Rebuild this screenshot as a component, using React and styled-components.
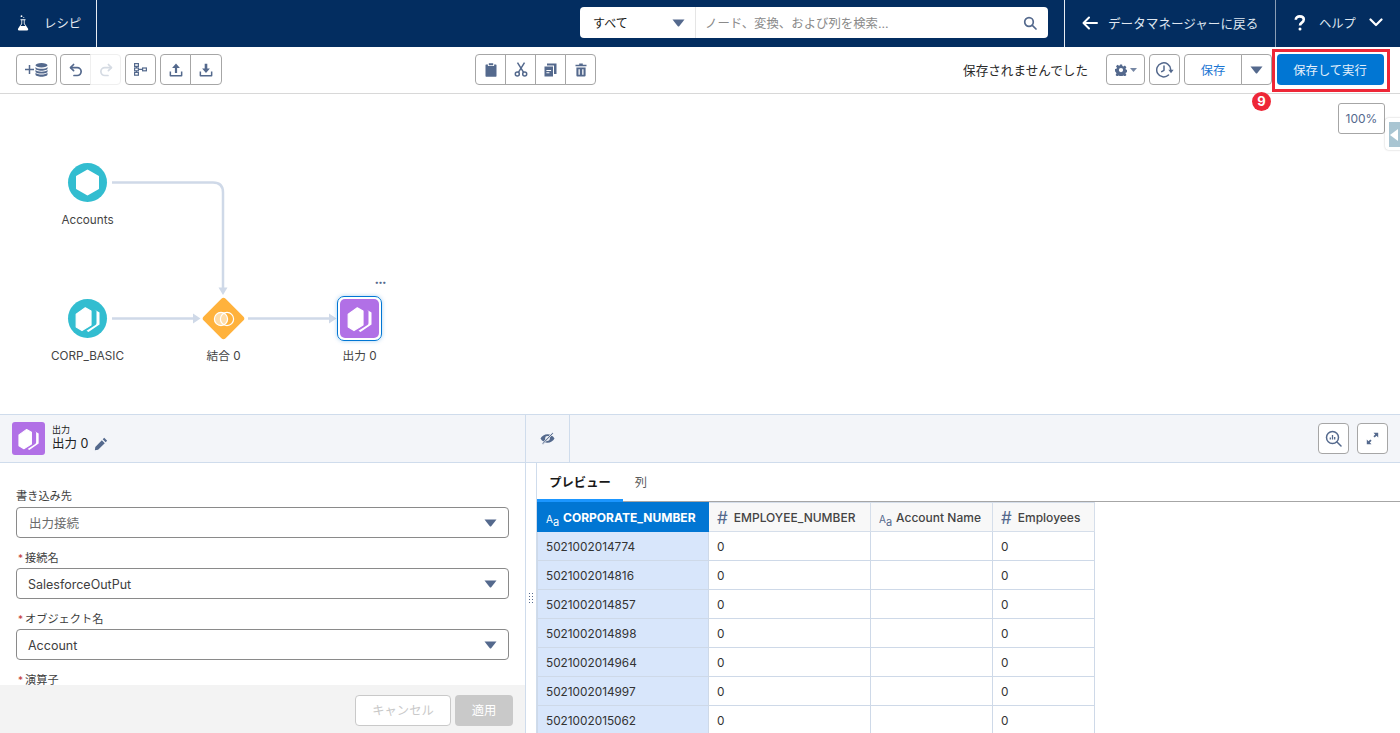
import React from "react";
import styled, { createGlobalStyle } from "styled-components";

const Global = createGlobalStyle`
  html, body { margin: 0; padding: 0; height: 100%; overflow: hidden; background: #fff; }
  body { font-family: Inter, "Noto Sans CJK JP", sans-serif; font-size: 12px; color: #181818; }
  * { box-sizing: border-box; }
`;

const Page = styled.div`
  width: 1400px; height: 733px; position: relative; overflow: hidden;
  display: flex; flex-direction: column;
`;

/* Header */
const Header = styled.header`
  height: 47px; flex: none; background: #032d60; display: flex; align-items: stretch; color: #e8edf4;
`;
const AppName = styled.div`
  width: 97px; border-right: 1px solid #e6ebf2; display: flex; align-items: center; padding-left: 17px; gap: 15px;
  font-size: 12.4px; padding-bottom: 2px;
`;
const Search = styled.div`
  margin-left: 483px; margin-top: 7px; height: 31px; width: 468px; display: flex; background: #fff; border-radius: 4px; overflow: hidden;
`;
const ScopeSelect = styled.div`
  width: 116px; flex: none; display: flex; align-items: center; justify-content: space-between; padding: 0 10px 0 13px;
  font-size: 12px; color: #181818; border-right: 1px solid #e5e5e5;
`;
const SearchInput = styled.div`
  flex: 1; display: flex; align-items: center; justify-content: space-between; padding: 0 11px 0 9px; font-size: 12.4px; color: #8a8a8a;
`;
const NavItem = styled.div`
  display: flex; align-items: center; border-left: 1px solid #e6ebf2; font-size: 12.6px; color: #dfe6ef;
  height: 47px; padding-bottom: 2px;
`;
const BackLink = styled(NavItem)`
  margin-left: 16px; width: 211px; padding-left: 17px; gap: 10px;
`;
const HelpLink = styled(NavItem)`
  width: 125px; padding-left: 18px; gap: 13px; border-left-color: #8a9db5; font-size: 12.3px;
`;

/* Toolbar */
const Toolbar = styled.div`
  height: 47px; flex: none; border-bottom: 1px solid #d8d8d8; display: flex; align-items: center; padding: 0 16px 1px; background: #fff;
`;
const Group = styled.div`
  display: flex; height: 31px; margin-left: ${p => p.$ml ?? 4}px;
  &:first-child { margin-left: 0; }
`;
const ToolButton = styled.button`
  width: ${p => p.$w || 30}px; height: 31px; padding: 0; margin: 0 0 0 -1px; background: #fff; display: flex; align-items: center; justify-content: center; gap: ${p => p.$gap || 1}px;
  border: 1px solid ${p => p.$disabled ? "#efefef" : "#a6a6a6"}; color: ${p => p.$disabled ? "#d5dbe3" : "#54698d"};
  font-family: inherit; font-size: 12.3px;
  &:first-child { border-radius: 4px 0 0 4px; margin-left: 0; }
  &:last-child { border-radius: 0 4px 4px 0; }
  &:only-child { border-radius: 4px; }
`;
const BrandText = styled.span` color: #1b76d3; `;
const Unsaved = styled.div`
  margin-left: auto; font-size: 12.6px; color: #2a2a2a; margin-right: 18px;
`;
const RunButton = styled.button`
  width: 107px; height: 31px; margin-left: 5px; border: none; border-radius: 4px; background: #0176d3; color: #e5f0fb;
  font-family: inherit; font-size: 12.3px; padding: 0 1px 0 0;
`;
const Highlight = styled.div`
  position: absolute; left: 1272px; top: 49px; width: 118px; height: 43px; border: 3px solid #ee2737;
`;
const StepBadge = styled.div`
  position: absolute; left: 1252px; top: 92px; width: 19px; height: 19px; border-radius: 50%; background: #ee2737; color: #fff;
  font: 700 13px/19px Inter, sans-serif; text-align: center;
`;

/* Canvas */
const Canvas = styled.div`
  height: 320px; flex: none; position: relative; background: #fff;
`;
const Links = styled.svg`
  position: absolute; left: 0; top: 0; width: 600px; height: 320px;
`;
const Node = styled.div`
  position: absolute; left: ${p => p.$x}px; top: ${p => p.$y}px; width: 100px; margin-left: -50px;
  display: flex; flex-direction: column; align-items: center;
`;
const NodeGlyph = styled.div`
  height: 46px; display: flex; align-items: center; justify-content: center;
`;
const NodeLabel = styled.div`
  font-size: 11.7px; color: #444; line-height: 14px; margin-top: 7px; white-space: nowrap;
`;
const Round = styled.div`
  width: 39px; height: 39px; border-radius: 50%; background: #32bdd0; display: flex; align-items: center; justify-content: center;
`;
const Selected = styled.div`
  width: 45px; height: 45px; border: 1px solid #0176d3; border-radius: 7px; padding: 2px; box-shadow: 0 0 4px rgba(1,118,211,.35);
`;
const Square = styled.div`
  width: 100%; height: 100%; border-radius: ${p => p.$r || 5}px; background: #b170e6; display: flex; align-items: center; justify-content: center;
`;
const More = styled.div`
  position: absolute; left: 375px; top: 186px; color: #54698d; font: 700 7.5px/6px Inter, sans-serif; letter-spacing: .2px;
`;
const Zoom = styled.div`
  position: absolute; left: 1338px; top: 9px; width: 47px; height: 31px; border: 1px solid #a6a6a6; border-radius: 3px; background: #fff;
  font-size: 12px; color: #54698d; display: flex; align-items: center; justify-content: center;
`;
const Collapse = styled.div`
  position: absolute; left: 1385px; top: 24px; width: 16px; height: 32px; background: #fff; border-radius: 4px 0 0 4px; padding: 4px 0 3px 4px;
  box-shadow: 0 0 2px rgba(0,0,0,.25);
`;
const CollapseInner = styled.div`
  height: 100%; background: #a9c5d2; display: flex; align-items: center;
`;

/* Panel */
const Panel = styled.div`
  flex: 1; display: grid; grid-template-rows: 49px 1fr; grid-template-columns: 526px 1fr; min-height: 0;
`;
const PanelHead = styled.div`
  background: #f3f5f9; border-top: 1px solid #cfdcec; border-bottom: 1px solid #cfdcec; display: flex; align-items: center;
  border-right: ${p => p.$divider ? "1px solid #cfdcec" : "none"};
`;
const NodeHead = styled(PanelHead)`
  padding-left: 12px; gap: 7px;
`;
const HeadIcon = styled.div`
  width: 33px; height: 33px;
`;
const HeadText = styled.div`
  display: flex; flex-direction: column; color: #222;
`;
const HeadKind = styled.span` font-size: 9px; line-height: 11px; margin: -1px 0 1px; `;
const HeadTitle = styled.span` font-size: 12.5px; line-height: 16px; display: flex; align-items: center; gap: 6px; `;
const EyeCell = styled.div`
  width: 44px; height: 100%; border-right: 1px solid #cfdcec; display: flex; align-items: center; justify-content: center; color: #54698d;
`;
const HeadActions = styled.div`
  margin-left: auto; padding-right: 12px; display: flex;
`;
const FormColumn = styled.div`
  position: relative; border-right: 1px solid #cfdcec; min-height: 0; overflow: hidden; display: flex; flex-direction: column;
`;
const FormBody = styled.div`
  flex: 1; padding: 26px 16px 0; overflow: hidden;
`;
const Field = styled.div` margin-bottom: 12px; `;
const Label = styled.div`
  font-size: 11.2px; line-height: 14px; color: #3e3e3e; display: flex;
  padding-top: ${p => p.$req ? 1 : 0}px; margin-bottom: ${p => p.$req ? 3 : 4}px;
`;
const Req = styled.span` color: #c23934; margin: 0 2px 0 2px; font-size: 10px; `;
const SelectBox = styled.div`
  height: 31px; border: 1px solid #8a8a8a; border-radius: 4px; background: #fff; display: flex; align-items: center; justify-content: space-between;
  padding: ${p => p.$muted ? 0 : 1}px 11px 0 ${p => p.$muted ? 12 : 11}px; font-size: 12.5px; color: ${p => p.$muted ? "#6b6b6b" : "#3e3e3e"};
`;
const FormFooter = styled.div`
  height: 48px; flex: none; background: #f3f3f3; display: flex; justify-content: flex-end; align-items: center; gap: 4px; padding: 2px 12px 0 0;
`;
const GhostButton = styled.button`
  width: 96px; height: 31px; background: #fff; border: 1px solid #c9c9c9; border-radius: 4px; color: #c9c9c9; font-family: inherit; font-size: 12.3px; padding: 0;
`;
const GreyButton = styled.button`
  width: 58px; height: 31px; background: #c9c9c9; border: none; border-radius: 4px; color: #fff; font-family: inherit; font-size: 12.3px; padding: 0;
`;
const PreviewColumn = styled.div`
  display: flex; min-height: 0; overflow: hidden;
`;
const Splitter = styled.div`
  width: 11px; flex: none; border-right: 1px solid #cfdcec; display: flex; align-items: center; justify-content: center; background: #fff;
`;
const Grip = styled.div`
  width: 6px; height: 12px;
  background-image: radial-gradient(circle, #54698d 0.8px, transparent 1px);
  background-size: 3px 3px;
`;
const Preview = styled.div` flex: 1; min-width: 0; `;
const Tabs = styled.div`
  height: 39px; border-bottom: 1px solid #a6a6a6; display: flex; align-items: stretch;
`;
const Tab = styled.div`
  width: ${p => p.$w}px; display: flex; align-items: center; justify-content: center; font-size: 12.3px; margin-bottom: -1px;
  padding: ${p => p.$active ? "1px 0 0" : "0 0 1px"};
  color: ${p => p.$active ? "#181818" : "#5c5c5c"}; font-weight: ${p => p.$active ? 600 : 400};
  border-bottom: ${p => p.$active ? "3px solid #1b96ff" : "none"};
`;
const Table = styled.table`
  border-collapse: collapse; table-layout: fixed; width: 557px; margin: 0; font-size: 11.8px;
`;
const Th = styled.th`
  height: 29px; width: ${p => p.$w}px; padding: 0 0 0 8px; text-align: left; white-space: nowrap; font-size: 12px; font-weight: ${p => p.$active ? 700 : 500};
  background: ${p => p.$active ? "#0176d3" : "#f8f8f8"}; color: ${p => p.$active ? "#fff" : "#444"};
  border: 1px solid #d5deea; ${p => p.$active ? "border-color: #0176d3;" : ""}
`;
const Td = styled.td`
  height: 29px; padding: 2px 0 0 8px; color: #333; border: 1px solid #ced9e8; background: ${p => p.$key ? "#d8e6fb" : "#fff"};
`;
const TypeAa = styled.span`
  display: inline-flex; align-items: flex-end; margin-right: 4px; font-size: 10px; font-weight: 400; color: ${p => p.$active ? "#fff" : "#54698d"};
  line-height: 12px; vertical-align: -1px;
  & > i { font-style: normal; font-size: 11px; position: relative; top: 3px; }
`;
const TypeHash = styled.span`
  font-size: 17px; font-weight: 400; color: #54698d; margin-right: 6px; line-height: 12px; vertical-align: -2px;
`;
const OverlapPos = styled.div`
  position: absolute; display: flex;
`;

const Caret = ({ c = "#54698d", w = 13, h = 8 }) => (
  <svg width={w} height={h} viewBox="0 0 13 8"><path d="M0.5 0.5h12L7.2 7.2q-.7.8-1.4 0z" fill={c} /></svg>
);
const Flask = () => (
  <svg width="12" height="16" viewBox="0 0 12 16" fill="#fff"><circle cx="4.500" cy="1.200" r=".9"/><circle cx="6.800" cy="2.600" r=".5"/><path d="M3.500 4.300h5v.9h-.9v3.300l3.500 5.200q.6 1.800-1 1.800H2q-1.600 0-1-1.800l3.400-5.200V5.200h-.9z"/><path d="M5.200 5.200h1.600v3.500L8.500 11h-5l1.700-2.300z" fill="#032d60"/></svg>
);
const Magnifier = ({ c = "#54698d" }) => (
  <svg width="14" height="14" viewBox="0 0 14 14" fill="none" stroke={c} strokeWidth="1.700"><circle cx="6" cy="6" r="4.300"/><path d="M9.300 9.300l3.700 3.700" strokeLinecap="round"/></svg>
);
const ArrowLeft = () => (
  <svg width="16" height="14" viewBox="0 0 16 14" fill="none" stroke="#fff" strokeWidth="2" strokeLinecap="round" strokeLinejoin="round"><path d="M15 7H2M7 1.500L1.500 7 7 12.500"/></svg>
);
const Chevron = () => (
  <svg width="14" height="9" viewBox="0 0 14 9" fill="none" stroke="#fff" strokeWidth="2.200" strokeLinecap="round" strokeLinejoin="round"><path d="M1.500 1.500L7 7l5.500-5.500"/></svg>
);
const Question = () => (
  <svg width="12" height="16" viewBox="0 0 12 16" fill="none" stroke="#fff" strokeWidth="2.600"><path d="M1.800 4.800C1.800 2.600 3.500 1.400 5.800 1.400s4 1.200 4 3.200c0 3-3.800 3-3.800 5.800"/><circle cx="6" cy="14" r="1.500" fill="#fff" stroke="none"/></svg>
);
const Db = () => (
  <svg width="13" height="14" viewBox="0 0 13 14" fill="#54698d"><ellipse cx="6.500" cy="2.300" rx="6" ry="2.200"/><path d="M.5 3.900c1 1.400 3.400 1.900 6 1.900s5-.5 6-1.900v1.600c0 1.300-2.700 2.200-6 2.200s-6-.9-6-2.200z"/><path d="M.5 6.800c1 1.400 3.400 1.900 6 1.900s5-.5 6-1.900v1.600c0 1.300-2.700 2.200-6 2.200S.5 9.700.5 8.400z"/><path d="M.5 9.700c1 1.400 3.400 1.700 6 1.700s5-.3 6-1.700v1.800c0 1.300-2.700 2.200-6 2.200s-6-.9-6-2.200z"/></svg>
);
const Undo = ({ flip }) => (
  <svg width="14" height="14" viewBox="0 0 14 14" fill="none" stroke="currentColor" strokeWidth="1.700" strokeLinecap="round" strokeLinejoin="round" style={flip ? { transform: "scaleX(-1)" } : undefined}><path d="M4.600 1.500L1.500 4.600l3.100 3"/><path d="M1.800 4.600h6.400a3.900 3.900 0 0 1 0 7.900H5"/></svg>
);
const Tree = () => (
  <svg width="13" height="13" viewBox="0 0 13 13" fill="none" stroke="currentColor" strokeWidth="1.200"><rect x=".6" y=".6" width="3.800" height="2.800"/><rect x=".6" y="5" width="3.800" height="2.800"/><rect x=".6" y="9.400" width="3.800" height="2.800"/><rect x="8.600" y="5" width="3.800" height="2.800"/><path d="M2.500 3.400V5M2.500 7.800v1.600M4.400 6.400h4.200"/></svg>
);
const Upload = ({ down }) => (
  <svg width="14" height="14" viewBox="0 0 14 14" fill="currentColor"><path d="M.6 8.600h1.500v3.300h9.800V8.600h1.500v4a.9.9 0 0 1-.9.9H1.500a.9.9 0 0 1-.9-.9z"/>{down ? <path d="M5.700.8h2.600v4.800h2.600L7 10 3.100 5.600h2.600z"/> : <path d="M7 .6l3.900 4.400H8.100v5H5.900V5H3.100z"/>}</svg>
);
const Clipboard = () => (
  <svg width="12" height="14" viewBox="0 0 12 14" fill="currentColor"><path d="M1.100 1.600h1.800v1.500h6.200V1.600h1.800c.4 0 .6.300.6.600v10.900c0 .4-.2.700-.6.700H1.100c-.4 0-.6-.3-.6-.7V2.200c0-.3.200-.6.600-.6zM3.800.3h4.400v2H3.800z"/></svg>
);
const Cut = () => (
  <svg width="14" height="15" viewBox="0 0 14 15" fill="none" stroke="currentColor" strokeWidth="1.500"><circle cx="3.300" cy="12" r="2"/><circle cx="10.700" cy="12" r="2"/><path d="M4.400 10.300L10.500.6M9.600 10.300L3.500.6"/></svg>
);
const Copy = () => (
  <svg width="13" height="14" viewBox="0 0 13 14" fill="currentColor"><path d="M.5 3.400h8.500v10.100H.5zM2.400 7v1h4.700V7zm0 2.300v1h3v-1z" fillRule="evenodd"/><path d="M3 .5h9.500v10.600H10V2.400H3z"/></svg>
);
const Trash = () => (
  <svg width="12" height="14" viewBox="0 0 12 14" fill="currentColor"><path d="M4.200.5h3.600v1.200h3.700v1.500H.5V1.700h3.700z"/><path d="M1.400 4.500h9.200v8.100c0 .5-.4.900-.9.900H2.300c-.5 0-.9-.4-.9-.9zM3.500 6.300v5.400h1.300V6.300zm3.700 0v5.400h1.300V6.300z" fillRule="evenodd"/></svg>
);
const Gear = () => (
  <svg width="12" height="12" viewBox="0 0 13 13" fill="currentColor"><path fillRule="evenodd" d="M5.300.5h2.400l.3 1.700 1.200.5L10.700 1.700l1.700 1.700-1 1.500.5 1.200 1.600.3v2.400l-1.600.3-.5 1.200 1 1.500-1.700 1.700-1.500-1-1.200.5-.3 1.600H5.300l-.3-1.600-1.200-.5-1.500 1-1.700-1.700 1-1.500-.5-1.200L0 7.900V5.500l1.600-.3.500-1.200-1-1.500 1.700-1.700 1.500 1 1.200-.5zM6.500 4.300a2.300 2.300 0 1 0 0 4.600 2.300 2.300 0 0 0 0-4.600z"/></svg>
);
const History = () => (
  <svg width="18" height="16" viewBox="0 0 18 16" fill="none" stroke="currentColor" strokeWidth="1.500"><path d="M12.500 13A7 7 0 1 1 14.700 7.500" strokeLinecap="round"/><path d="M8 4v4.300l-2.300 1.400" strokeLinecap="round" strokeLinejoin="round"/><path d="M12.400 7.800h5.200l-2.600 3.400z" fill="currentColor" stroke="none"/></svg>
);
const EyeOff = () => (
  <svg width="15" height="13" viewBox="0 0 15 13" fill="currentColor"><path fillRule="evenodd" d="M7.500 2.200c3 0 5.600 1.800 7 4.300-1.400 2.500-4 4.300-7 4.300s-5.600-1.800-7-4.300c1.400-2.500 4-4.300 7-4.300zm0 1.900a2.400 2.400 0 1 0 0 4.800 2.400 2.400 0 0 0 0-4.800z"/><path d="M12.300.6l1.100.9L3 12.400l-1.100-.9z" stroke="#f3f5f9" strokeWidth=".8"/></svg>
);
const Inspect = () => (
  <svg width="17" height="17" viewBox="0 0 17 17" fill="none" stroke="currentColor" strokeWidth="1.500"><circle cx="7.500" cy="7.500" r="6"/><path d="M12 12l4 4" strokeLinecap="round"/><path d="M5.300 9.500V7.500M7.500 9.500V5M9.700 9.500V7" strokeWidth="1.300"/></svg>
);
const Expand = () => (
  <svg width="13" height="13" viewBox="0 0 13 13" fill="currentColor"><path d="M7.500.8h4.700v4.700L10.500 3.800 8.700 5.600 7.400 4.300 9.200 2.500zM5.500 12.200H.8V7.500l1.700 1.700 1.800-1.800 1.300 1.300-1.800 1.800z"/></svg>
);
const Pencil = () => (
  <svg width="14" height="14" viewBox="0 0 13 13" fill="#54698d"><path d="M9.500.8l2.700 2.700-1.400 1.400-2.700-2.700zM7.300 3l2.700 2.700-6.200 6.200L.8 12.300l.4-3.100z"/></svg>
);
const Hexagon = () => (
  <svg width="39" height="39" viewBox="0 0 39 39" fill="#fff" stroke="#fff" strokeWidth="2" strokeLinejoin="round"><path d="M19.500 7.500L30 13.500v12l-10.500 6-10.500-6v-12z"/></svg>
);
const OutputMark = ({ size = 39 }) => (
  <svg width={size} height={size} viewBox="0 0 39 39" fill="#fff"><path d="M17.300 8.800L23 12v14l-9 5.600-5.800-3.500V15.300z" stroke="#fff" strokeWidth="1.200" strokeLinejoin="round"/><path d="M26.500 10.500l5 3v12L20.500 33l-2-1.200 9-5.800q1-.7 1-2V12z"/></svg>
);
const OverlapMark = () => (
  <svg width="22" height="16" viewBox="0 0 22 16" fill="none" stroke="#fff" strokeWidth="1.200"><circle cx="8" cy="8" r="6.600" fill="#fff" fillOpacity=".55"/><circle cx="14" cy="8" r="6.600"/></svg>
);
const GearCaret = () => <svg width="7" height="4" viewBox="0 0 7 4"><path d="M0 0h7L3.500 4z" fill="currentColor" opacity=".8"/></svg>;

const rows = ["5021002014774","5021002014816","5021002014857","5021002014898","5021002014964","5021002014997","5021002015062"];

const FormField = ({ label, required, value, muted }) => (
  <Field>
    <Label $req={required}>{required && <Req>*</Req>}{label}</Label>
    <SelectBox $muted={muted}>{value}<Caret /></SelectBox>
  </Field>
);

export default function App() {
  return (
    <Page>
      <Global />
      <Header>
        <AppName><Flask />レシピ</AppName>
        <Search>
          <ScopeSelect>すべて<Caret /></ScopeSelect>
          <SearchInput>ノード、変換、および列を検索...<Magnifier /></SearchInput>
        </Search>
        <BackLink><ArrowLeft />データマネージャーに戻る</BackLink>
        <HelpLink><Question />ヘルプ<Chevron /></HelpLink>
      </Header>

      <Toolbar>
        <Group><ToolButton $w={41}>
          <svg width="9" height="9" viewBox="0 0 9 9" stroke="#54698d" strokeWidth="1.500"><path d="M4.500 0v9M0 4.500h9"/></svg><Db />
        </ToolButton></Group>
        <Group $ml={3}><ToolButton $w={31}><Undo /></ToolButton><ToolButton $w={31} $disabled><Undo flip /></ToolButton></Group>
        <Group><ToolButton $w={31}><Tree /></ToolButton></Group>
        <Group><ToolButton $w={31}><Upload /></ToolButton><ToolButton $w={32}><Upload down /></ToolButton></Group>
        <Group $ml={253}>
          <ToolButton $w={31}><Clipboard /></ToolButton>
          <ToolButton $w={31}><Cut /></ToolButton>
          <ToolButton $w={31}><Copy /></ToolButton>
          <ToolButton $w={31}><Trash /></ToolButton>
        </Group>
        <Unsaved>保存されませんでした</Unsaved>
        <Group $ml={0}><ToolButton $w={39} $gap={3}><Gear /><GearCaret /></ToolButton></Group>
        <Group><ToolButton $w={31}><History /></ToolButton></Group>
        <Group><ToolButton $w={58}><BrandText>保存</BrandText></ToolButton><ToolButton $w={31}><Caret w={13} h={8} /></ToolButton></Group>
        <RunButton>保存して実行</RunButton>
      </Toolbar>

      <Canvas>
        <Links viewBox="0 0 600 320" fill="none">
          <g stroke="#cfd9e8" strokeWidth="2.500">
            <path d="M112 88.500H213q10 0 10 10V195"/>
            <path d="M112 224.500H194"/>
            <path d="M248 224.500H331"/>
          </g>
          <g fill="#cfd9e8">
            <path d="M218.500 193.500h9L223 201z"/>
            <path d="M193 219.500v10l7.500-5z"/>
            <path d="M329 219.500v10l7.500-5z"/>
          </g>
        </Links>
        <Node $x={87.500} $y={65.500}><NodeGlyph><Round><Hexagon /></Round></NodeGlyph><NodeLabel>Accounts</NodeLabel></Node>
        <Node $x={87.500} $y={201.500}><NodeGlyph><Round><OutputMark /></Round></NodeGlyph><NodeLabel>CORP_BASIC</NodeLabel></Node>
        <Node $x={223.500} $y={201.500}>
          <NodeGlyph>
            <svg width="45" height="45" viewBox="0 0 45 45"><rect x="7" y="7" width="31" height="31" rx="3" fill="#ffb23c" transform="rotate(45 22.500 22.500)"/></svg>
            <OverlapPos><OverlapMark /></OverlapPos>
          </NodeGlyph>
          <NodeLabel>結合 0</NodeLabel>
        </Node>
        <Node $x={359.500} $y={201.500}>
          <NodeGlyph><Selected><Square><OutputMark /></Square></Selected></NodeGlyph>
          <NodeLabel>出力 0</NodeLabel>
        </Node>
        <More>•••</More>
        <Zoom>100%</Zoom>
        <Collapse><CollapseInner><svg width="9" height="12" viewBox="0 0 9 12"><path d="M9 0v12L1 6z" fill="#fff"/></svg></CollapseInner></Collapse>
      </Canvas>

      <Panel>
        <NodeHead $divider>
          <HeadIcon><Square $r={3}><OutputMark size={33} /></Square></HeadIcon>
          <HeadText>
            <HeadKind>出力</HeadKind>
            <HeadTitle>出力 0 <Pencil /></HeadTitle>
          </HeadText>
        </NodeHead>
        <PanelHead>
          <EyeCell><EyeOff /></EyeCell>
          <HeadActions>
            <Group><ToolButton $w={31}><Inspect /></ToolButton></Group>
            <Group $ml={8}><ToolButton $w={31}><Expand /></ToolButton></Group>
          </HeadActions>
        </PanelHead>

        <FormColumn>
          <FormBody>
            <FormField label="書き込み先" value="出力接続" muted />
            <FormField label="接続名" required value="SalesforceOutPut" />
            <FormField label="オブジェクト名" required value="Account" />
            <FormField label="演算子" required value="" />
          </FormBody>
          <FormFooter>
            <GhostButton>キャンセル</GhostButton>
            <GreyButton>適用</GreyButton>
          </FormFooter>
        </FormColumn>

        <PreviewColumn>
          <Splitter><Grip /></Splitter>
          <Preview>
            <Tabs>
              <Tab $w={86} $active>プレビュー</Tab>
              <Tab $w={36}>列</Tab>
            </Tabs>
            <Table>
              <thead>
                <tr>
                  <Th $w={171} $active><TypeAa $active>A<i>a</i></TypeAa>CORPORATE_NUMBER</Th>
                  <Th $w={162}><TypeHash>#</TypeHash>EMPLOYEE_NUMBER</Th>
                  <Th $w={122}><TypeAa>A<i>a</i></TypeAa>Account Name</Th>
                  <Th $w={102}><TypeHash>#</TypeHash>Employees</Th>
                </tr>
              </thead>
              <tbody>
                {rows.map(r => (
                  <tr key={r}><Td $key>{r}</Td><Td>0</Td><Td /><Td>0</Td></tr>
                ))}
              </tbody>
            </Table>
          </Preview>
        </PreviewColumn>
      </Panel>

      <Highlight />
      <StepBadge>9</StepBadge>
    </Page>
  );
}
